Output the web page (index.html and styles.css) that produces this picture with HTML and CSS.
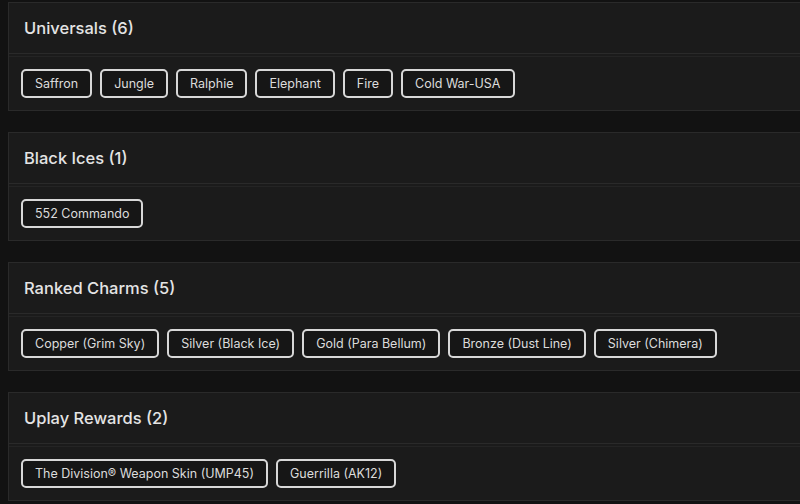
FILE: index.html
```html
<!DOCTYPE html>
<html>
<head>
<meta charset="utf-8">
<link rel="stylesheet" href="styles.css">
</head>
<body>
<main class="page">
  <section class="card">
    <h2 class="card-title">Universals (6)</h2>
    <div class="card-body">
      <span class="chip">Saffron</span>
      <span class="chip">Jungle</span>
      <span class="chip">Ralphie</span>
      <span class="chip">Elephant</span>
      <span class="chip">Fire</span>
      <span class="chip">Cold War-USA</span>
    </div>
  </section>
  <section class="card">
    <h2 class="card-title">Black Ices (1)</h2>
    <div class="card-body">
      <span class="chip">552 Commando</span>
    </div>
  </section>
  <section class="card">
    <h2 class="card-title">Ranked Charms (5)</h2>
    <div class="card-body">
      <span class="chip">Copper (Grim Sky)</span>
      <span class="chip">Silver (Black Ice)</span>
      <span class="chip">Gold (Para Bellum)</span>
      <span class="chip">Bronze (Dust Line)</span>
      <span class="chip">Silver (Chimera)</span>
    </div>
  </section>
  <section class="card">
    <h2 class="card-title">Uplay Rewards (2)</h2>
    <div class="card-body">
      <span class="chip">The Division® Weapon Skin (UMP45)</span>
      <span class="chip">Guerrilla (AK12)</span>
    </div>
  </section>
</main>
</body>
</html>
```
FILE: styles.css
```css
html, body {
  margin: 0;
  padding: 0;
  background: #121212;
  overflow: hidden;
}
body {
  font-family: Inter, "Noto Sans", sans-serif;
  color: #e2e2e2;
}
.page {
  padding: 2px 0 0 8px;
  display: flex;
  flex-direction: column;
  gap: 21px;
}
.card {
  background: #1b1b1b;
  border: 1px solid #2a2a2a;
  border-right: none;
}
.card-title {
  margin: 0;
  height: 51px;
  padding: 0 15px 1px;
  box-sizing: border-box;
  display: flex;
  align-items: center;
  font-size: 16.5px;
  font-weight: 500;
  color: #e4e4e4;
  border-bottom: 1px solid #2a2a2a;
}
.card-body {
  margin-top: 2px;
  border-top: 1px solid #242424;
  padding: 12px 12px 12px;
  display: flex;
  flex-wrap: wrap;
  gap: 8px;
}
.chip {
  display: inline-flex;
  align-items: center;
  height: 25px;
  padding: 0 12px;
  border: 2px solid #d8d8d8;
  border-radius: 5px;
  background: #161616;
  color: #dcdcdc;
  font-size: 12.5px;
}
```
